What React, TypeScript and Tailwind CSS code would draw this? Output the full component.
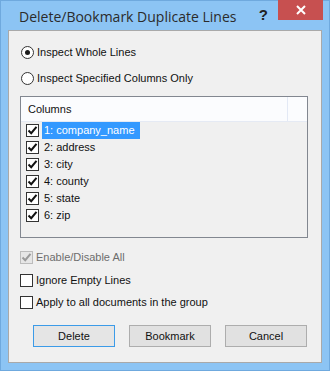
const uiFont = { fontFamily: "Tahoma, 'Liberation Sans', Arial, sans-serif" };
const titleFont = { fontFamily: "'Segoe UI', 'Open Sans', 'Noto Sans', sans-serif" };

const COLUMNS = ['1: company_name', '2: address', '3: city', '4: county', '5: state', '6: zip'];

function Check({ disabled = false, checked = true }: { disabled?: boolean; checked?: boolean }) {
  return (
    <span
      className={`w-[13px] h-[13px] shrink-0 border flex items-center justify-center ${
        disabled ? 'border-[#bcbcbc] bg-[#e6e6e6]' : 'border-[#333333] bg-white'
      }`}
    >
      {checked && (
        <svg width="11" height="11" viewBox="0 0 11 11">
          <path
            d="M1.5 5.5 L4.2 8.2 L9.5 1.8"
            fill="none"
            stroke={disabled ? '#9a9a9a' : '#111111'}
            strokeWidth="2"
          />
        </svg>
      )}
    </span>
  );
}

function Radio({ selected }: { selected: boolean }) {
  return (
    <span className="w-[13px] h-[13px] shrink-0 ml-[1px] rounded-full border border-[#333333] bg-white flex items-center justify-center">
      {selected && <span className="w-[5px] h-[5px] rounded-full bg-[#1a1a1a]" />}
    </span>
  );
}

export default function App() {
  return (
    <div className="w-[330px] h-[371px] bg-[#8cc4f4] border border-[#6fa9de] flex flex-col text-[#111111]" style={uiFont}>
      {/* Title bar */}
      <div className="h-[29px] flex items-start shrink-0">
        <div className="pl-[18px] pt-[5px] text-[14px] text-[#2b2b2b]" style={titleFont}>
          Delete/Bookmark Duplicate Lines
        </div>
        <div className="ml-auto mr-[10px] pt-[3px] text-[15px] font-bold text-[#222222]">?</div>
        <div className="w-[45px] h-[20px] -mt-[1px] mr-[6px] bg-[#c75050] flex items-center justify-center">
          <svg width="10" height="10" viewBox="0 0 10 10">
            <path d="M1 1 L9 9 M9 1 L1 9" stroke="white" strokeWidth="2" />
          </svg>
        </div>
      </div>

      {/* Client area */}
      <div className="mx-[7px] h-[333px] bg-[#f0f0f0] border border-[#a9a9a9] flex flex-col px-[11px] pt-[13px] text-[11px]">
        <label className="flex items-center gap-[3px] h-[16px]">
          <Radio selected />
          <span>Inspect Whole Lines</span>
        </label>
        <label className="flex items-center gap-[3px] h-[16px] mt-[10px]">
          <Radio selected={false} />
          <span>Inspect Specified Columns Only</span>
        </label>

        {/* Columns list */}
        <div className="mt-[10px] w-[288px] h-[142px] border border-[#828790] bg-[#f0f0f0] flex flex-col">
          <div className="h-[25px] bg-[#fbfcfe] border-b border-[#e5eaf4] flex shrink-0">
            <div className="w-[267px] border-r border-[#e3e9f5] flex items-center pl-[7px]">Columns</div>
          </div>
          <div className="flex flex-col pl-[5px]">
            {COLUMNS.map((col, i) => (
              <div key={col} className="h-[17px] flex items-center">
                <Check />
                <span
                  className={`ml-[3px] h-[17px] flex items-center px-[2px] ${
                    i === 0 ? 'bg-[#3399ff] text-white pr-[5px]' : ''
                  }`}
                >
                  {col}
                </span>
              </div>
            ))}
          </div>
        </div>

        <label className="flex items-center gap-[3px] h-[16px] mt-[11px] text-[#6d6d6d]">
          <Check disabled />
          <span>Enable/Disable All</span>
        </label>
        <label className="flex items-center gap-[3px] h-[16px] mt-[7px]">
          <Check checked={false} />
          <span>Ignore Empty Lines</span>
        </label>
        <label className="flex items-center gap-[3px] h-[16px] mt-[6px]">
          <Check checked={false} />
          <span>Apply to all documents in the group</span>
        </label>

        {/* Buttons */}
        <div className="mt-[15px] pl-[13px] flex gap-[14px]">
          <button className="w-[82px] h-[22px] bg-[#e5e5e5] border border-[#3c9be8] text-[11px]">Delete</button>
          <button className="w-[82px] h-[22px] bg-[#e1e1e1] border border-[#adadad] text-[11px]">Bookmark</button>
          <button className="w-[82px] h-[22px] bg-[#e1e1e1] border border-[#adadad] text-[11px]">Cancel</button>
        </div>
      </div>
    </div>
  );
}
